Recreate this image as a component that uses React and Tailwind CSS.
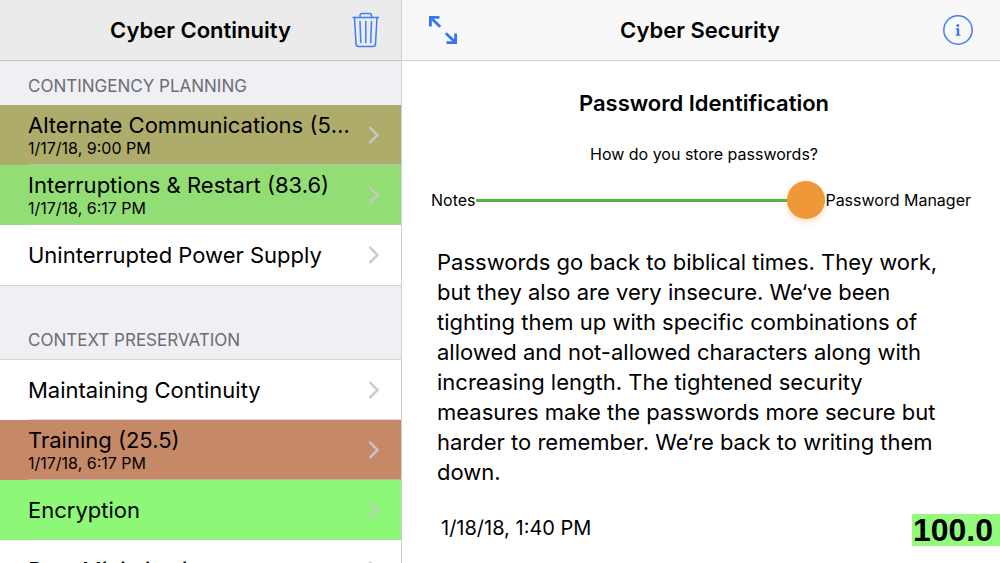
import React, { useState } from 'react';

const sections = [
  {
    title: 'Contingency Planning',
    className: 'h-11',
    items: [
      { name: 'Alternate Communications (50.0)', date: '1/17/18, 9:00 PM', color: 'bg-[#aeac6b]' },
      { name: 'Interruptions & Restart (83.6)', date: '1/17/18, 6:17 PM', color: 'bg-[#92de74]' },
      { name: 'Uninterrupted Power Supply', color: 'bg-white' },
    ],
  },
  {
    title: 'Context Preservation',
    className: 'h-[75px] border-y border-[#d3d3d8]',
    items: [
      { name: 'Maintaining Continuity', color: 'bg-white' },
      { name: 'Training (25.5)', date: '1/17/18, 6:17 PM', color: 'bg-[#c68968]' },
      { name: 'Encryption', color: 'bg-[#8df777]' },
      { name: 'Data Minimization', color: 'bg-white' },
    ],
  },
];

const TrashIcon = () => (
  <svg width="28" height="36" viewBox="0 0 28 36" fill="none" stroke="#3b80f6" strokeWidth="1.5" strokeLinecap="round">
    <path d="M1 5.5h25.500" />
    <path d="M8 5.500V3.500c0-1.300.7-2 2-2h7.500c1.300 0 2 .7 2 2v2" />
    <path d="M2.500 5.500l1.500 26.500c.1 1.600 1 2.500 2.500 2.500h14.500c1.500 0 2.400-.9 2.500-2.500L25 5.500" />
    <path d="M8 9.500l.8 21M13.800 9.500v21M19.500 9.500l-.8 21" />
  </svg>
);

const ExpandIcon = () => (
  <svg width="28" height="28" viewBox="0 0 28 28" fill="none" stroke="#3478f6" strokeWidth="2.800">
    <path d="M1.400 10.500V1.400h9.100M1.400 1.400l9.800 9.400" />
    <path d="M26.600 17.500v9.100h-9.100M26.600 26.600l-9.800-9.400" />
  </svg>
);

const InfoIcon = () => (
  <svg width="30" height="30" viewBox="0 0 30 30" fill="none">
    <circle cx="15" cy="15" r="14.200" stroke="#3b80f6" strokeWidth="1.500" />
    <circle cx="14.800" cy="10.600" r="1.500" fill="#3478f6" />
    <path d="M12.700 13.300h3.500v6.200h1.200v1.200h-4.700v-1.200h1.200v-5h-1.200z" fill="#3478f6" />
  </svg>
);

const Chevron = () => (
  <svg className="shrink-0" width="12" height="18" viewBox="0 0 12 18" fill="none" stroke="#c7c7cc" strokeWidth="2.400">
    <path d="M1.500 1l8 8-8 8" />
  </svg>
);

const Row = ({ item, last }) => (
  <li className={item.color}>
    <button type="button" className="flex h-[60px] w-full text-left">
      <span className={`ml-7 flex h-full min-w-0 grow items-center border-b pr-[21px] ${last ? 'border-transparent' : 'border-[#c8c7cc]/60'}`}>
        <span className="min-w-0 grow pr-3">
          <span className="block truncate text-[22px] leading-[26px]">{item.name}</span>
          {item.date && <span className="block text-base leading-5">{item.date}</span>}
        </span>
        <Chevron />
      </span>
    </button>
  </li>
);

const Sidebar = () => (
  <aside className="flex w-[40.2%] shrink-0 flex-col border-r border-[#d0d0d4] bg-[#efeff4]">
    <header className="flex h-[61px] shrink-0 items-center border-b border-[#c5c5c7] bg-[#ebebeb] px-[21px]">
      <span className="w-7" />
      <h1 className="grow text-center text-[22px] font-semibold">Cyber Continuity</h1>
      <button type="button" aria-label="Delete">
        <TrashIcon />
      </button>
    </header>
    <div className="min-h-0 grow overflow-hidden">
      {sections.map((section) => (
        <section key={section.title}>
          <h2 className={`flex items-end px-7 pb-1.5 text-[17px] text-[#6d6d72] uppercase ${section.className}`}>
            {section.title}
          </h2>
          <ul>
            {section.items.map((item, i) => (
              <Row key={item.name} item={item} last={i === section.items.length - 1} />
            ))}
          </ul>
        </section>
      ))}
    </div>
  </aside>
);

const Question = () => {
  const [value, setValue] = useState(100);

  return (
    <main className="flex min-h-0 grow flex-col overflow-hidden">
      <div className="px-[29px]">
        <h2 className="mt-[27px] pl-1.5 text-center text-[22px] leading-[30px] font-semibold">Password Identification</h2>
        <label htmlFor="storage" className="mt-6 block pl-1.5 text-center text-base leading-6">
          How do you store passwords?
        </label>
        <div className="mt-[15px] flex h-[38px] items-center text-base">
          <span>Notes</span>
          <input
            id="storage"
            type="range"
            min="0"
            max="100"
            value={value}
            onChange={(e) => setValue(Number(e.target.value))}
            className="h-[38px] min-w-0 grow appearance-none bg-transparent [&::-webkit-slider-runnable-track]:h-[3px] [&::-webkit-slider-runnable-track]:bg-[#53b437] [&::-webkit-slider-thumb]:-mt-[18px] [&::-webkit-slider-thumb]:size-[38px] [&::-webkit-slider-thumb]:appearance-none [&::-webkit-slider-thumb]:rounded-full [&::-webkit-slider-thumb]:bg-[#ef9837] [&::-webkit-slider-thumb]:shadow-[0_3px_6px_rgba(239,152,55,0.3)]"
          />
          <span>Password Manager</span>
        </div>
      </div>
      <p className="mt-7 px-[35px] text-[22px] leading-[30px]">
        Passwords go back to biblical times. They work, but they also are very insecure. We‘ve been tighting them up
        with specific combinations of allowed and not-allowed characters along with increasing length. The tightened
        security measures make the passwords more secure but harder to remember. We‘re back to writing them down.
      </p>
      <footer className="mt-[23px] flex items-center justify-between pl-[39px]">
        <time className="text-xl">1/18/18, 1:40 PM</time>
        <output
          htmlFor="storage"
          className="mt-1 bg-[#93fb7b] pr-[7px] pl-px font-['Liberation_Sans',Arial,sans-serif] text-[32px] leading-8 font-bold"
        >
          {value.toFixed(1)}
        </output>
      </footer>
    </main>
  );
};

export default function App() {
  return (
    <div className="flex h-screen overflow-hidden bg-white font-[Inter,sans-serif] text-black">
      <Sidebar />
      <div className="flex min-w-0 grow flex-col">
        <header className="flex h-[61px] shrink-0 items-center border-b border-[#d2d2d2] bg-[#f8f8f8] px-[27px]">
          <button type="button" aria-label="Toggle full screen">
            <ExpandIcon />
          </button>
          <h1 className="grow text-center text-[22px] font-semibold">Cyber Security</h1>
          <button type="button" aria-label="Info">
            <InfoIcon />
          </button>
        </header>
        <Question />
      </div>
    </div>
  );
}
